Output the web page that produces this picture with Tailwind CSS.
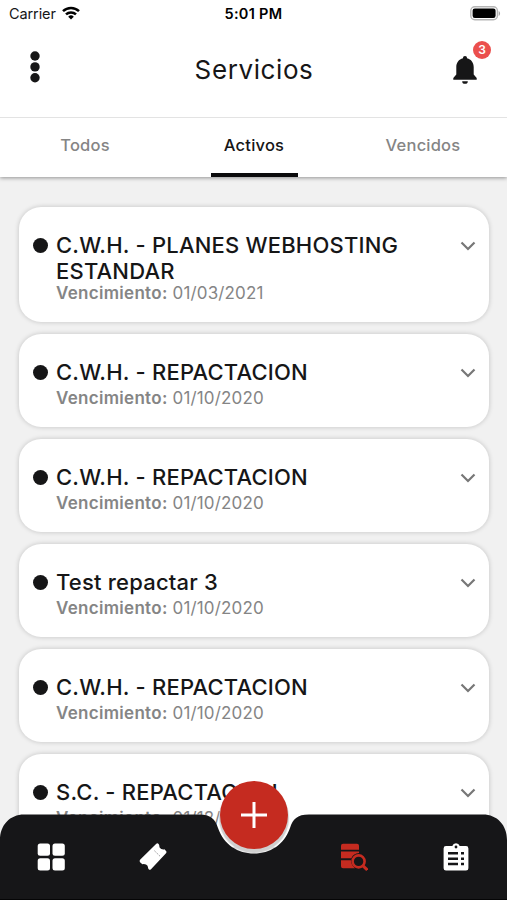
<!DOCTYPE html>
<html lang="es">
<head>
  <meta charset="utf-8" />
  <meta name="viewport" content="width=device-width, initial-scale=1" />
  <title>Servicios</title>
  <script src="https://cdn.jsdelivr.net/npm/@tailwindcss/browser@4"></script>
</head>
<body class="bg-[#f1f1f1] font-['Inter',sans-serif] text-[#161617]">
  <div class="relative flex flex-col w-[507px] h-[900px] overflow-hidden">
    <header class="relative z-10 flex flex-col h-[177px] shrink-0 bg-white shadow-[0_1px_4px_rgba(0,0,0,0.4)]">
      <!-- status bar -->
      <div class="grid grid-cols-3 items-center h-7 pl-[9px] pr-[6px] text-[14.5px]">
        <div class="flex items-center gap-[6px]">
          <span class="tracking-[-0.1px]">Carrier</span>
          <svg class="w-[18px] h-[14px] -mt-[2px]" viewBox="0 0 18 14" fill="none" stroke="#000" stroke-width="2.5">
            <path d="M1 5.2a11.5 11.5 0 0 1 16 0" />
            <path d="M4 8.4a7.2 7.2 0 0 1 10 0" />
            <path d="M9 13.4 6.2 10.7a4 4 0 0 1 5.6 0z" fill="#000" stroke="none" />
          </svg>
        </div>
        <span class="-ml-[3px] text-center font-semibold tracking-[0.3px] text-black">5:01 PM</span>
        <svg class="justify-self-end w-[31px] h-[15px] -mt-[2px]" viewBox="0 0 31 15">
          <rect x="0.8" y="0.8" width="26.6" height="13" rx="4" fill="#fff" stroke="#b5b5b5" stroke-width="1.4" />
          <rect x="2.6" y="2.6" width="23" height="9.4" rx="2.2" fill="#000" />
          <path d="M28.7 5v5c1.8-.8 1.8-4.200 0-5z" fill="#a5a5a5" />
        </svg>
      </div>

      <!-- title bar -->
      <div class="flex items-center justify-between h-[89px] pl-[30px] pr-[16px] pb-[7px]">
        <svg class="w-[10px] h-8 mb-[5px]" viewBox="0 0 10 32" fill="#161617">
          <circle cx="5" cy="5" r="4.700" />
          <circle cx="5" cy="15.900" r="4.700" />
          <circle cx="5" cy="26.700" r="4.700" />
        </svg>
        <h1 class="ml-[15px] text-[26px] tracking-[0.6px]">Servicios</h1>
        <div class="relative w-[38px] h-[43px] mb-[13px]">
          <svg class="absolute left-0 bottom-0 w-[24px] h-[28px]" viewBox="0 0 24 28" fill="#161617">
            <path d="M12 0c1.300 0 2 .9 2 2.200 4.300 1 6.700 4.500 6.700 8.800v7.500L23.700 22v1.700H.3V22l3-3.500V11c0-4.300 2.400-7.800 6.700-8.800C10 .9 10.700 0 12 0z" />
            <path d="M9.200 25.200h5.600a2.800 2.600 0 0 1-5.600 0z" />
          </svg>
          <span class="absolute right-0 top-0 grid place-items-center w-[18px] h-[18px] rounded-full bg-[#eb4f4d] text-white text-[12px] font-semibold">3</span>
        </div>
      </div>

      <!-- tabs -->
      <nav class="grid grid-cols-3 h-[60px] border-t border-[#e3e3e3] text-center text-[16.5px] font-medium tracking-[0.2px] text-[#858585]">
        <a class="pt-[15px] pl-px">Todos</a>
        <a class="flex flex-col items-center justify-between pt-[15px] pl-px text-[#161617]">
          Activos
          <span class="w-[87px] h-1 bg-[#0b0b0c]"></span>
        </a>
        <a class="pt-[15px] pl-px">Vencidos</a>
      </nav>
    </header>

    <main id="list" class="flex flex-col gap-3 pt-[30px] pl-[19px] pr-[18.5px]"></main>

    <!-- bottom bar -->
    <footer class="absolute inset-x-0 bottom-0 z-20 h-[124px]">
      <svg class="absolute inset-0 w-full h-full" viewBox="0 0 507 124">
        <path d="M0 124V64C0 49 10 38.500 24 38.500H199C211 38.500 215 43 218 52C224 69 238 77.500 254 77.500S284 69 290 52C293 43 297 38.500 309 38.500H483C497 38.500 507 49 507 64V124Z" fill="#161618" />
        <path d="M0 123.500H507" stroke="#050506" />
      </svg>
      <button class="absolute left-[220px] top-[4.500px] grid place-items-center w-[68px] h-[68px] rounded-full bg-[#c52b20] shadow-[0_3px_1px_1px_#cfcfcf]">
        <svg class="w-[26px] h-[26px]" viewBox="0 0 26 26" stroke="#fff" stroke-width="3">
          <path d="M13 0V26M0 13H26" />
        </svg>
      </button>
      <div class="relative flex justify-between items-center pt-[67px] pl-[37px] pr-[37px]">
        <svg class="w-7 h-7" viewBox="0 0 28 28" fill="#fff">
          <rect x="0.700" y="0.500" width="12.300" height="12.300" rx="2.500" />
          <rect x="15.500" y="0.500" width="12.300" height="12.300" rx="2.500" />
          <rect x="0.700" y="15.300" width="12.300" height="12.300" rx="2.500" />
          <rect x="15.500" y="15.300" width="12.300" height="12.300" rx="2.500" />
        </svg>
        <svg class="w-7 h-7 mr-[100px]" viewBox="0 0 28 28">
          <path d="M17.300 .8Q18.500-.2 19.600 1L20.300 2.300Q20 5 22.200 6 24 6.800 25.500 6.300L27 7.900Q28 9.100 27 10.300L12 26.300Q10.800 27.400 9.700 26.300L9 25.100Q9.300 22.400 7 21.400 5 20.700 3.400 21.200L1.300 19.400Q0 18 1.300 16.500Z" fill="#fff" />
          <path d="M15.500 7.800 20.800 13" stroke="#77777a" stroke-width="0.900" stroke-dasharray="1.500 1.500" fill="none" />
        </svg>
        <svg class="w-7 h-7" viewBox="0 0 28 28">
          <path d="M3 .8H17Q19 .8 19 2.800V6.700H1V2.800Q1 .8 3 .8ZM1 8.600H19V10Q13.500 10.300 11.300 15.300H1ZM1 17.200H10.900Q11.200 22 15 25.300H3Q1 25.300 1 23.300Z" fill="#c52b20" />
          <circle cx="18.600" cy="18.400" r="6" fill="#161618" stroke="#c52b20" stroke-width="2.600" />
          <path d="M22.800 22.600 27.300 27" stroke="#c52b20" stroke-width="3" />
        </svg>
        <svg class="w-7 h-7" viewBox="0 0 28 28">
          <path d="M4 3H10.300A3.900 3.900 0 0 1 17.700 3H24Q26.400 3 26.400 5.400V25.200Q26.400 27.600 24 27.600H4Q1.600 27.600 1.600 25.200V5.400Q1.600 3 4 3Z" fill="#fff" />
          <circle cx="14" cy="4" r="1.400" fill="#161618" />
          <path d="M6 10.300H16M6 15.700H16M6 21H16M19 10.300H22M19 15.700H22M19 21H22" stroke="#161618" stroke-width="2.500" />
        </svg>
      </div>
    </footer>
  </div>

  <script>
    const services = [
      { name: 'C.W.H. - PLANES WEBHOSTING ESTANDAR', due: '01/03/2021' },
      { name: 'C.W.H. - REPACTACION', due: '01/10/2020' },
      { name: 'C.W.H. - REPACTACION', due: '01/10/2020' },
      { name: 'Test repactar 3', due: '01/10/2020' },
      { name: 'C.W.H. - REPACTACION', due: '01/10/2020' },
      { name: 'S.C. - REPACTACION', due: '01/12/2020' },
    ];

    document.getElementById('list').innerHTML = services.map((s) => `
      <article class="flex items-start shrink-0 pt-[25px] pb-[20px] pl-[14px] pr-[13px] rounded-[22px] bg-white shadow-[0_0_5px_rgba(0,0,0,0.2)]">
        <span class="w-[15px] h-[15px] mt-[6px] mr-[8px] shrink-0 rounded-full bg-[#161617]"></span>
        <div class="flex-1">
          <h2 class="min-h-[30px] max-w-[370px] text-[22px] leading-[26px] font-medium tracking-[0.2px]">${s.name}</h2>
          <p class="text-[17px] leading-[18px] tracking-[0.15px] text-[#858585]"><b class="font-semibold tracking-[0.3px]">Vencimiento:</b> ${s.due}</p>
        </div>
        <svg class="w-4 h-[10px] mt-[9px]" viewBox="0 0 16 10" fill="none" stroke="#777" stroke-width="2.200">
          <path d="M1.500 1.500 8 8 14.500 1.500" />
        </svg>
      </article>`).join('');
  </script>
</body>
</html>
